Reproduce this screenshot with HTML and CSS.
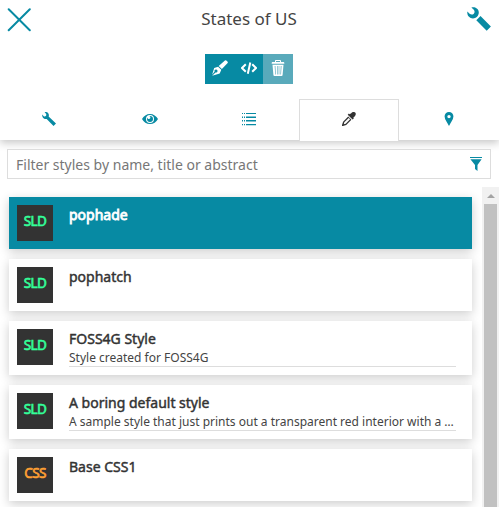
FILE: index.html
```html
<!DOCTYPE html>
<html lang="en">
<head>
<meta charset="utf-8">
<title>States of US</title>
<link rel="stylesheet" href="styles.css">
</head>
<body>
<div class="panel">
  <header class="head">
    <div class="title-row">
      <svg class="close" width="24" height="24" viewBox="0 0 24 24"><path d="M1.700 1.200 22.800 22.300M22.800 1.200 1.700 22.300"/></svg>
      <h1>States of US</h1>
      <svg class="wrench" width="24" height="24" viewBox="0 0 24 24"><path d="M4.400.4C6.500-.2 9.200.3 10.700 2.200c1.200 1.600 1.400 3.800.7 5.400-.6 1.800-1.900 3-3.400 3.500-2.200.8-4.700.2-6.300-1.500C.5 8.200.1 6.400.4 4.500L2.600 6.800C4 8 5.800 7.800 6.800 6.700 7.900 5.600 7.800 3.700 6.800 2.700zM13.500 9 23.900 19.500l-4.200 4.200L9.300 13.200z"/></svg>
    </div>
    <div class="toolbar">
      <span class="tool"><svg width="16" height="16" viewBox="0 0 16 16"><path d="M13.200.2C14.500.4 15.800 1.400 15.900 2.700L9.900 9 6.700 6.100zM6.100 6.700 9.300 9.800 7.700 13.600.2 15.700 3.500 12.400A1.500 1.500 0 1 0 2.600 11.500L.1 14.700 2.200 8z"/></svg></span>
      <span class="tool code"><svg width="16" height="16" viewBox="0 0 16 16"><path d="M4.800 4.200 1 8l3.800 3.800M11.200 4.200 15 8l-3.800 3.800M9.300 2.500 6.800 13.700"/></svg></span>
      <span class="tool disabled"><svg width="16" height="16" viewBox="0 0 16 16"><path fill-rule="evenodd" d="M5 2V.8C5 .3 5.500 0 6 0h4c.6 0 1 .3 1 .8V2h2.500c.5 0 .8.4.8.9v.9H1.700v-.9c0-.5.3-.9.8-.9zM6 1v1h4V1zM2.500 4.800h11L12.600 15c-.1.600-.4 1-1 1H4.400c-.6 0-.9-.4-1-1zM4.700 6l.5 8.500h.6L5.400 6zM7 6v8.500h.6V6zM8.700 6v8.500h.6V6zM10.800 6l-.4 8.500h.6l.5-8.500z"/></svg></span>
    </div>
    <nav class="tabs">
      <span class="tab"><svg width="14" height="14" viewBox="0 0 24 24"><path d="M4.400.2C6.500-.4 9.200.1 10.700 2c1.200 1.600 1.400 3.800.7 5.600L24 19.800l-4.200 4.200L8 11.900c-2.200.8-4.700-.2-6.300-1.900C.5 8.400.1 6.300.4 4.400l2.600 2.800C4.200 8 5.800 7.800 6.600 6.900 7.600 5.800 7.600 3.900 6.800 2.900z"/></svg></span>
      <span class="tab"><svg width="16" height="14" viewBox="0 0 16 14"><path fill-rule="evenodd" d="M0 7C1.600 4 4.600 2 8 2s6.400 2 8 5c-1.600 3-4.600 5-8 5S1.600 10 0 7zM8 3a4 4 0 1 0 0 8 4 4 0 0 0 0-8zM8 4a3 3 0 1 1-3 3c0-.6.2-1.200.5-1.600C5.600 6.400 6.200 7 7 7s1.400-.6 1.400-1.400C8.400 5 8 4.500 7.400 4.100z"/></svg></span>
      <span class="tab"><svg width="14" height="14" viewBox="0 0 14 14"><path d="M0 1h1v1H0zM2 1h1v1H2zM4 1h10v1H4zM0 4.600h1V6H0zM2 4.600h1V6H2zM4 4.600h10V6H4zM0 8h1v1.500H0zM2 8h1v1.500H2zM4 8h10v1.500H4zM0 12h1v1.300H0zM2 12h1v1.300H2zM4 12h10v1.300H4z"/></svg></span>
      <span class="tab active"><svg width="14" height="14" viewBox="0 0 14 14"><path fill-rule="evenodd" d="M9.200 1.200c1.300-1.500 3-1.500 4-.7 1 1.200.7 2.800-.6 4l-1.300 1.200.5.700-1.200 1.200-4.900-4.800 1.200-1.200.7.600zM6.200 4.600l3.200 3.200-5.200 5.100L1 14H0v-1l1.100-3.300zM6.700 5.900 2.300 10.300l-.5 1.900 1.900-.5L8.100 7.300z"/></svg></span>
      <span class="tab"><svg width="14" height="14" viewBox="0 0 14 14"><path fill-rule="evenodd" d="M7 0a4.400 4.400 0 0 1 4.400 4.600C11.400 8 8.300 11 7 14 5.700 11 2.600 8 2.600 4.600A4.400 4.400 0 0 1 7 0zM7 2.900a1.700 1.700 0 1 0 0 3.400 1.700 1.700 0 0 0 0-3.400z"/></svg></span>
    </nav>
  </header>
  <div class="filter">
    <span>Filter styles by name, title or abstract</span>
    <svg width="12" height="14" viewBox="0 0 12 14"><path d="M0 0h12v1.100H0zM.4 2.200h11.200L7.500 8v6L5 12V8z"/></svg>
  </div>
  <div class="scroller">
    <ul class="list">
      <li class="card selected"><span class="badge">SLD</span><div class="info"><b>pophade</b></div></li>
      <li class="card"><span class="badge">SLD</span><div class="info"><b>pophatch</b></div></li>
      <li class="card"><span class="badge">SLD</span><div class="info"><b>FOSS4G Style</b><p>Style created for FOSS4G</p></div></li>
      <li class="card"><span class="badge">SLD</span><div class="info"><b>A boring default style</b><p>A sample style that just prints out a transparent red interior with a …</p></div></li>
      <li class="card"><span class="badge css">CSS</span><div class="info"><b>Base CSS1</b></div></li>
    </ul>
    <div class="scrollbar"><i class="arrow"></i><i class="thumb"></i></div>
  </div>
</div>
</body>
</html>
```
FILE: styles.css
```css
* { box-sizing: border-box; }
body { margin: 0; background: #fff; color: #333; font-family: "Noto Sans", sans-serif; }
svg { display: block; fill: #078aa3; }
.panel { width: 499px; height: 507px; overflow: hidden; display: flex; flex-direction: column; }
.head { height: 140px; flex: none; display: flex; flex-direction: column; box-shadow: 0 3px 8px rgba(0,0,0,.22); }
.title-row { height: 54px; flex: none; padding: 8px 8px 0 7px; display: flex; justify-content: space-between; align-items: flex-start; }
.close { fill: none; stroke: #078aa3; stroke-width: 2; stroke-linecap: round; }
.wrench { margin-top: -1px; }
h1 { margin: 0; font-size: 17px; font-weight: 400; line-height: 22px; color: #444; }
.toolbar { display: flex; flex: none; align-self: center; height: 30px; margin-right: 1px; }
.tool { width: 29px; background: #078aa3; display: flex; justify-content: center; align-items: center; padding-bottom: 2px; }
.tool svg { fill: #fff; }
.tool.code svg { fill: none; stroke: #fff; stroke-width: 2; }
.tool.disabled { width: 30px; background: #59aabb; }
.tabs { display: flex; flex: none; height: 42px; margin-top: 15px; padding-right: 1px; }
.tab { width: 100px; padding-top: 13px; display: flex; justify-content: center; flex: none; height: 41px; }
.tab:first-child { width: 99px; padding-right: 1px; }
.tab:nth-child(2) { padding-left: 2px; }
.tab.active { height: 42px; padding-top: 12px; border: 1px solid #ddd; border-bottom: 0; background: #fff; }
.tab.active svg { fill: #333; }
.filter { flex: none; height: 30px; width: 484px; margin: 9px 0 0 7px; padding: 0 8px; border: 1px solid #ddd; background: #fff; color: #777; font-size: 14px; display: flex; justify-content: space-between; align-items: center; }
.scroller { flex: 1; min-height: 0; margin-top: 8px; display: flex; overflow: hidden; }
.list { margin: 0; padding: 10px 10px 0 9px; width: 482px; list-style: none; display: flex; flex-direction: column; gap: 10px; }
.card { flex: none; width: 463px; min-height: 52px; padding: 8px 16px 8px 8px; display: flex; gap: 16px; background: #fff; box-shadow: 0 3px 10px rgba(0,0,0,.2); }
.badge { width: 36px; height: 36px; flex: none; background: #333; color: #33ff99; font-size: 13.5px; line-height: 32px; text-align: center; letter-spacing: -.6px; -webkit-text-stroke: .65px; }
.badge.css { color: #ffa033; }
.info { flex: 1; min-width: 0; }
.info b { display: block; font-size: 14px; font-weight: 400; line-height: 20px; -webkit-text-stroke: .45px; }
.info p { margin: 0; height: 18px; border-bottom: 1px solid #ddd; font-size: 12px; line-height: 17px; white-space: nowrap; color: #444; }
.selected { background: #078aa3; color: #fff; }
.selected b { -webkit-text-stroke: .8px; }
.scrollbar { width: 17px; background: #f1f1f1; display: flex; flex-direction: column; align-items: center; }
.arrow { height: 4px; margin: 7px 0 6px; border: 4px solid transparent; border-top: 0; border-bottom-color: #a3a3a3; }
.thumb { width: 13px; flex: 1; background: #c1c1c1; }
```
